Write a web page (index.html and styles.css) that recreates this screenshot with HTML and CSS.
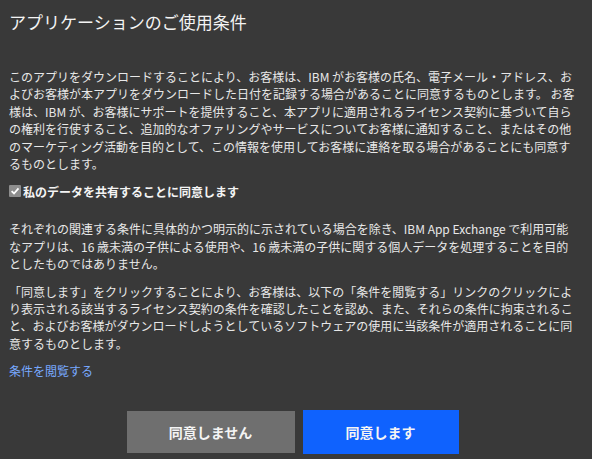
FILE: index.html
```html
<!DOCTYPE html>
<html lang="ja">
<head>
  <meta charset="UTF-8" />
  <title>アプリケーションのご使用条件</title>
  <link rel="stylesheet" href="styles.css">
</head>
<body>
<div class="modal">
  <h1 class="modal-title">アプリケーションのご使用条件</h1>

  <p class="text">このアプリをダウンロードすることにより、お客様は、IBM がお客様の氏名、電子メール・アドレス、およびお客様が本アプリをダウンロードした日付を記録する場合があることに同意するものとします。 お客様は、IBM が、お客様にサポートを提供すること、本アプリに適用されるライセンス契約に基づいて自らの権利を行使すること、追加的なオファリングやサービスについてお客様に通知すること、またはその他のマーケティング活動を目的として、この情報を使用してお客様に連絡を取る場合があることにも同意するものとします。</p>

  <label class="check">
    <span class="check-box">
      <svg width="10" height="10" viewBox="0 0 10 10"><path d="M1.6 5.2 L4 7.5 L8.5 2.4" fill="none" stroke="#ffffff" stroke-width="1.8"/></svg>
    </span>
    私のデータを共有することに同意します
  </label>

  <p class="text">それぞれの関連する条件に具体的かつ明示的に示されている場合を除き、IBM App Exchange で利用可能なアプリは、16 歳未満の子供による使用や、16 歳未満の子供に関する個人データを処理することを目的としたものではありません。</p>

  <p class="text">「同意します」をクリックすることにより、お客様は、以下の「条件を閲覧する」リンクのクリックにより表示される該当するライセンス契約の条件を確認したことを認め、また、それらの条件に拘束されること、およびお客様がダウンロードしようとしているソフトウェアの使用に当該条件が適用されることに同意するものとします。</p>

  <a class="link" href="#">条件を閲覧する</a>

  <div class="actions">
    <button class="btn btn-secondary">同意しません</button>
    <button class="btn btn-primary">同意します</button>
  </div>
</div>
</body>
</html>
```

FILE: styles.css
```css
body {
    margin: 0;
    background: #393939;
    font-family: "Noto Sans CJK JP", "Noto Sans", sans-serif;
    color: #f4f4f4;
}

.modal {
    padding: 10px 14px 0 9px;
}

.modal-title {
    margin: 0 0 34px 0;
    font-size: 17px;
    font-weight: 400;
    line-height: 24px;
}

.text {
    margin: 0 0 10px 0;
    font-size: 12px;
    line-height: 17.4px;
    color: #e8e8e8;
}

/* checkbox */
.check {
    display: flex;
    align-items: center;
    gap: 2px;
    font-size: 12px;
    font-weight: 700;
    margin: 0 0 20px 0;
    height: 18px;
}

.check-box {
    width: 12px;
    height: 12px;
    background: #8d8d8d;
    border-radius: 1px;
    display: flex;
    align-items: center;
    justify-content: center;
}

.link {
    display: block;
    font-size: 12px;
    color: #78a9ff;
    text-decoration: none;
    margin-top: 0;
}

.actions {
    display: flex;
    justify-content: center;
    align-items: center;
    gap: 8px;
    margin: 31px 2px 0 0;
}

.btn {
    border: 0;
    font-family: inherit;
    font-size: 14px;
    font-weight: 700;
    color: #f4f4f4;
    cursor: pointer;
}

.btn-secondary {
    width: 168px;
    height: 42px;
    background: #6f6f6f;
}

.btn-primary {
    width: 156px;
    height: 44px;
    background: #0f62fe;
}
```
